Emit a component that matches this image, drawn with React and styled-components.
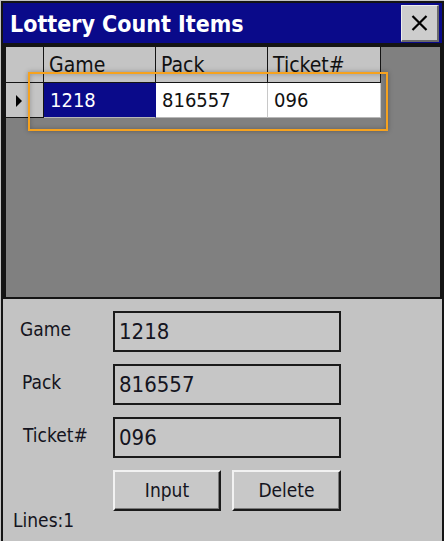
import React from "react";
import styled, { createGlobalStyle } from "styled-components";

const GlobalStyle = createGlobalStyle`
  html, body { margin: 0; padding: 0; background: #ffffff; }
  * { box-sizing: border-box; }
`;

const FONT = `"DejaVu Sans Condensed", "DejaVu Sans", "Liberation Sans", sans-serif`;
const NAVY = "#0a0a8a";

const Window = styled.div`
  position: relative;
  width: 444px;
  height: 541px;
  background: #141414;
  border-top: 1px solid #c4c4c4;
  border-left: 1px solid #c4c4c4;
  padding: 2px;
  display: flex;
  flex-direction: column;
  gap: 2px;
  font-family: ${FONT};
  font-stretch: condensed;
`;

const TitleBar = styled.div`
  height: 40px;
  flex: none;
  background: ${NAVY};
  display: flex;
  align-items: center;
  justify-content: space-between;
  padding: 2px 3px 1px 7px;
`;

const Title = styled.div`
  color: #ffffff;
  font-weight: bold;
  font-size: 23px;
  line-height: 1;
  padding-top: 2px;
`;

const CloseButton = styled.button`
  width: 38px;
  height: 37px;
  padding: 0;
  background: #cdcdcd;
  border-top: 1px solid #ececec;
  border-left: 1px solid #ececec;
  border-right: 2px solid #6a6a6a;
  border-bottom: 2px solid #6a6a6a;
  display: flex;
  align-items: center;
  justify-content: center;
`;

const GridArea = styled.div`
  height: 252px;
  flex: none;
  background: #808080;
  border-top: 2px solid #141414;
  border-left: 3px solid #141414;
  border-right: 2px solid #141414;
  display: grid;
  grid-template-columns: 38px 112px 112px 113px;
  grid-template-rows: 36px 35px;
  align-content: start;
`;

const HeadCell = styled.div`
  background: #c4c4c4;
  border-right: 1px solid #141414;
  border-bottom: 1px solid #141414;
  color: #111;
  font-size: 21px;
  display: flex;
  align-items: center;
  padding-left: 5px;
  padding-top: 1px;
`;

const RowHeadCell = styled(HeadCell)`
  padding-left: 10px;
`;

const Arrow = styled.span`
  width: 0;
  height: 0;
  border-top: 6px solid transparent;
  border-bottom: 6px solid transparent;
  border-left: 6px solid #000;
`;

const DataCell = styled.div`
  background: ${(p) => (p.$selected ? NAVY : "#ffffff")};
  color: ${(p) => (p.$selected ? "#ffffff" : "#111")};
  border-right: 1px solid ${(p) => (p.$selected ? NAVY : "#c8c8c8")};
  border-bottom: 1px solid #b8b8b8;
  font-size: 20px;
  display: flex;
  align-items: center;
  padding-left: 6px;
`;

const Panel = styled.div`
  flex: 1;
  background: #c3c3c3;
  padding: 12px 0 0 0;
  display: grid;
  grid-template-columns: 110px 228px;
  grid-auto-rows: 41px;
  row-gap: 12px;
  align-content: start;
`;

const Label = styled.div`
  font-size: 19px;
  color: #141420;
  align-self: center;
  padding-left: ${(p) => p.$indent}px;
  padding-bottom: 5px;
`;

const TextBox = styled.div`
  border: 2px solid #1a1a1a;
  background: #c6c6c6;
  font-size: 22px;
  color: #141420;
  display: flex;
  align-items: center;
  padding-left: 4px;
`;

const ButtonRow = styled.div`
  grid-column: 2;
  display: grid;
  grid-template-columns: 108px 109px;
  column-gap: 11px;
`;

const Button = styled.button`
  font-family: ${FONT};
  font-stretch: condensed;
  font-size: 19px;
  color: #141420;
  background: #c8c8c8;
  border-top: 2px solid #f2f2f2;
  border-left: 2px solid #f2f2f2;
  border-right: 2px solid #1a1a1a;
  border-bottom: 2px solid #1a1a1a;
  box-shadow: inset -1px -1px 0 #7a7a7a;
  padding: 0 0 2px 0;
`;

const Footer = styled.div`
  grid-column: 1 / span 2;
  margin-top: -12px;
  font-size: 19px;
  line-height: 18px;
  height: 18px;
  color: #141420;
  padding-left: 10px;
`;

const Highlight = styled.div`
  position: absolute;
  left: 27px;
  top: 71px;
  width: 360px;
  height: 59px;
  border: 2.5px solid #f6a21e;
  box-shadow: 0 0 5px rgba(0, 0, 0, 0.3), inset 0 0 5px rgba(0, 0, 0, 0.25);
  pointer-events: none;
`;

const fields = [
  { label: "Game", value: "1218", indent: 17 },
  { label: "Pack", value: "816557", indent: 19 },
  { label: "Ticket#", value: "096", indent: 20 },
];

export default function App() {
  return (
    <>
      <GlobalStyle />
      <Window>
        <TitleBar>
          <Title>Lottery Count Items</Title>
          <CloseButton aria-label="Close">
            <svg width="17" height="16" viewBox="0 0 17 16">
              <path d="M1.5 1 L15.5 15 M15.5 1 L1.5 15" stroke="#000" strokeWidth="2.2" fill="none" />
            </svg>
          </CloseButton>
        </TitleBar>
        <GridArea>
          <HeadCell />
          <HeadCell>Game</HeadCell>
          <HeadCell>Pack</HeadCell>
          <HeadCell>Ticket#</HeadCell>
          <RowHeadCell>
            <Arrow />
          </RowHeadCell>
          <DataCell $selected>1218</DataCell>
          <DataCell>816557</DataCell>
          <DataCell>096</DataCell>
        </GridArea>
        <Panel>
          {fields.map((f) => (
            <React.Fragment key={f.label}>
              <Label $indent={f.indent}>{f.label}</Label>
              <TextBox>{f.value}</TextBox>
            </React.Fragment>
          ))}
          <ButtonRow>
            <Button>Input</Button>
            <Button>Delete</Button>
          </ButtonRow>
          <Footer>Lines:1</Footer>
        </Panel>
        <Highlight />
      </Window>
    </>
  );
}
